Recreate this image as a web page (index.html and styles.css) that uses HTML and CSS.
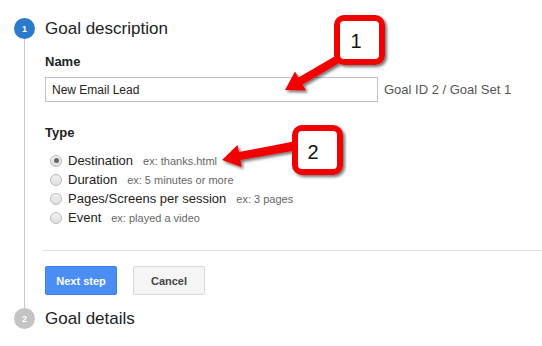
FILE: index.html
```html
<!DOCTYPE html>
<html lang="en">

<head>
    <meta charset="UTF-8">
    <meta name="viewport" content="width=device-width, initial-scale=1.0">
    <title>Goal setup</title>
    <link rel="stylesheet" href="styles.css">
</head>

<body>

    <div class="wizard">
        <div class="step">
            <div class="rail">
                <span class="badge badge-active">1</span>
                <span class="rail-line"></span>
            </div>
            <div class="step-body">
                <h2 class="step-title">Goal description</h2>

                <div class="field-label">Name</div>
                <div class="name-row">
                    <input type="text" class="text-input" value="New Email Lead">
                    <span class="goal-id">Goal ID 2 / Goal Set 1</span>
                </div>

                <div class="field-label type-label">Type</div>
                <ul class="type-list">
                    <li class="type-item">
                        <span class="radio radio-checked"></span>
                        <span class="type-name">Destination</span>
                        <span class="hint">ex: thanks.html</span>
                    </li>
                    <li class="type-item">
                        <span class="radio"></span>
                        <span class="type-name">Duration</span>
                        <span class="hint">ex: 5 minutes or more</span>
                    </li>
                    <li class="type-item">
                        <span class="radio"></span>
                        <span class="type-name">Pages/Screens per session</span>
                        <span class="hint">ex: 3 pages</span>
                    </li>
                    <li class="type-item">
                        <span class="radio"></span>
                        <span class="type-name">Event</span>
                        <span class="hint">ex: played a video</span>
                    </li>
                </ul>

                <div class="divider"></div>

                <div class="actions">
                    <button class="btn btn-primary">Next step</button>
                    <button class="btn">Cancel</button>
                </div>
            </div>
        </div>

        <div class="step">
            <div class="rail">
                <span class="badge">2</span>
            </div>
            <div class="step-body">
                <h2 class="step-title">Goal details</h2>
            </div>
        </div>
    </div>

    <!-- callouts drawn over the form -->
    <svg class="callouts" width="542" height="346" viewBox="0 0 542 346">
        <defs>
            <filter id="shadow" x="-30%" y="-30%" width="160%" height="160%">
                <feDropShadow dx="2" dy="2" stdDeviation="1.5" flood-color="#000" flood-opacity="0.55"/>
            </filter>
        </defs>
        <g filter="url(#shadow)">
            <polygon class="arrow" points="343,51.5 298.5,77.4 295,71.4 285,90 306,90.4 302.5,84.4 347,58.5"/>
            <rect class="callout-box" x="337" y="18" width="45" height="44" rx="7"/>
        </g>
        <text class="callout-num" x="356" y="48">1</text>

        <g filter="url(#shadow)">
            <polygon class="arrow" points="299,140.5 239,152 237.5,145 222,160 241.5,167 240.5,160 301,149.5"/>
            <rect class="callout-box" x="295" y="128" width="45" height="44" rx="7"/>
        </g>
        <text class="callout-num" x="313" y="159">2</text>
    </svg>

</body>

</html>
```

FILE: styles.css
```css
body {
    font-family: 'Liberation Sans', Arial, sans-serif;
    background-color: #fff;
    color: #222;
    margin: 0;
    padding: 0;
    position: relative;
    width: 542px;
    height: 346px;
    overflow: hidden;
}

.wizard {
    padding-top: 18px;
}

.step {
    display: grid;
    grid-template-columns: 45px 1fr;
}

.rail {
    display: flex;
    flex-direction: column;
}

.badge {
    width: 21px;
    height: 21px;
    margin-left: 14px;
    border-radius: 50%;
    background-color: #c4c4c4;
    color: #fff;
    font-size: 9px;
    font-weight: bold;
    display: flex;
    align-items: center;
    justify-content: center;
    flex: none;
}

.badge-active {
    background-color: #2b7bca;
}

.rail-line {
    flex: 1;
    width: 1px;
    margin-left: 24px;
    background-color: #c8c8c8;
}

.step-body {
    padding-bottom: 13px;
}

.step-title {
    margin: 0;
    font-size: 17px;
    font-weight: normal;
    line-height: 21px;
    color: #222;
}

.field-label {
    margin-top: 15px;
    font-size: 13px;
    font-weight: bold;
    line-height: 16px;
}

.type-label {
    margin-top: 23px;
}

.name-row {
    margin-top: 7px;
    display: flex;
    align-items: center;
    gap: 6px;
}

.text-input {
    box-sizing: border-box;
    width: 333px;
    height: 25px;
    padding: 0 6px;
    border: 1px solid #c2c2c2;
    border-radius: 0;
    font-family: inherit;
    font-size: 12px;
    color: #222;
    outline: none;
}

.goal-id {
    font-size: 13px;
    line-height: 15px;
    color: #555;
}

.type-list {
    list-style: none;
    margin: 10px 0 0;
    padding: 0;
}

.type-item {
    display: flex;
    align-items: center;
    height: 19px;
    font-size: 13px;
}

.radio {
    box-sizing: border-box;
    width: 12px;
    height: 12px;
    margin-left: 5px;
    margin-right: 6px;
    border-radius: 50%;
    border: 1px solid #b9b9b9;
    background: linear-gradient(#f2f2f2, #dedede);
    display: flex;
    align-items: center;
    justify-content: center;
}

.radio-checked::after {
    content: "";
    width: 5px;
    height: 5px;
    border-radius: 50%;
    background-color: #666;
}

.type-name {
    color: #222;
}

.hint {
    margin-left: 10px;
    font-size: 11px;
    color: #666;
}

.divider {
    margin-top: 23px;
    margin-left: -2px;
    height: 1px;
    background-color: #e0e0e0;
}

.actions {
    margin-top: 15px;
    display: flex;
    gap: 16px;
}

.btn {
    box-sizing: border-box;
    width: 72px;
    height: 29px;
    border: 1px solid #d9d9d9;
    border-radius: 2px;
    background-color: #f5f5f5;
    color: #444;
    font-family: inherit;
    font-size: 11px;
    font-weight: bold;
    padding: 0;
    cursor: pointer;
}

.btn-primary {
    background-color: #4a8ef5;
    border-color: #3b7ee6;
    color: #fff;
}

.callouts {
    position: absolute;
    left: 0;
    top: 0;
    pointer-events: none;
}

.arrow {
    fill: #f20000;
}

.callout-box {
    fill: #fff;
    stroke: #f20000;
    stroke-width: 6;
}

.callout-num {
    font-family: 'Liberation Sans', Arial, sans-serif;
    font-size: 20px;
    fill: #111;
    text-anchor: middle;
}
```
